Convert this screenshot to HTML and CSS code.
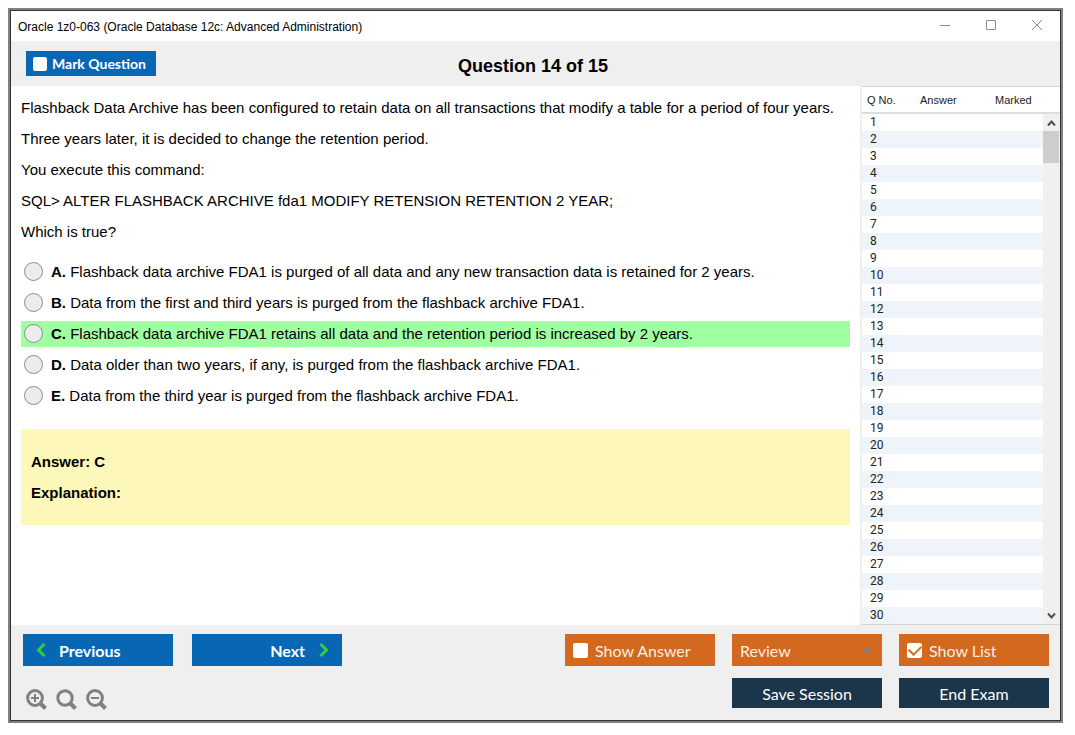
FILE: index.html
```html
<!DOCTYPE html>
<html lang="en">
<head>
<meta charset="utf-8">
<title>Oracle 1z0-063 (Oracle Database 12c: Advanced Administration)</title>
<link rel="stylesheet" href="styles.css">
</head>
<body>
<div class="window">
  <header class="titlebar">
    <span class="titlebar-text">Oracle 1z0-063 (Oracle Database 12c: Advanced Administration)</span>
    <div class="window-controls">
      <button type="button" aria-label="Minimize"><svg width="12" height="12" viewBox="0 0 12 12"><path d="M1 6.5H11"/></svg></button>
      <button type="button" aria-label="Maximize"><svg width="12" height="12" viewBox="0 0 12 12"><path d="M1.5 1.5h9v9h-9z"/></svg></button>
      <button type="button" aria-label="Close"><svg width="12" height="12" viewBox="0 0 12 12"><path d="M1 1l10 10M11 1L1 11"/></svg></button>
    </div>
  </header>

  <div class="heading">
    <label class="mark"><input type="checkbox" class="check">Mark Question</label>
    <h1>Question 14 of 15</h1>
  </div>

  <div class="body">
    <main class="question">
      <div class="prompt">
        <p>Flashback Data Archive has been configured to retain data on all transactions that modify a table for a period of four years.</p>
        <p>Three years later, it is decided to change the retention period.</p>
        <p>You execute this command:</p>
        <p>SQL&gt; ALTER FLASHBACK ARCHIVE fda1 MODIFY RETENSION RETENTION 2 YEAR;</p>
        <p>Which is true?</p>
      </div>
      <div class="options" role="radiogroup" aria-label="Answers">
        <label class="option"><input type="radio" name="answer"><span><b>A.</b> Flashback data archive FDA1 is purged of all data and any new transaction data is retained for 2 years.</span></label>
        <label class="option"><input type="radio" name="answer"><span><b>B.</b> Data from the first and third years is purged from the flashback archive FDA1.</span></label>
        <label class="option option-correct"><input type="radio" name="answer"><span><b>C.</b> Flashback data archive FDA1 retains all data and the retention period is increased by 2 years.</span></label>
        <label class="option"><input type="radio" name="answer"><span><b>D.</b> Data older than two years, if any, is purged from the flashback archive FDA1.</span></label>
        <label class="option"><input type="radio" name="answer"><span><b>E.</b> Data from the third year is purged from the flashback archive FDA1.</span></label>
      </div>
      <section class="explanation">
        <p>Answer: C</p>
        <p>Explanation:</p>
      </section>
    </main>

    <aside class="list">
      <table>
        <thead><tr><th class="col-no">Q No.</th><th class="col-answer">Answer</th><th>Marked</th></tr></thead>
        <tbody>
          <tr><td>1</td><td></td><td></td></tr>
          <tr><td>2</td><td></td><td></td></tr>
          <tr><td>3</td><td></td><td></td></tr>
          <tr><td>4</td><td></td><td></td></tr>
          <tr><td>5</td><td></td><td></td></tr>
          <tr><td>6</td><td></td><td></td></tr>
          <tr><td>7</td><td></td><td></td></tr>
          <tr><td>8</td><td></td><td></td></tr>
          <tr><td>9</td><td></td><td></td></tr>
          <tr><td>10</td><td></td><td></td></tr>
          <tr><td>11</td><td></td><td></td></tr>
          <tr><td>12</td><td></td><td></td></tr>
          <tr><td>13</td><td></td><td></td></tr>
          <tr><td>14</td><td></td><td></td></tr>
          <tr><td>15</td><td></td><td></td></tr>
          <tr><td>16</td><td></td><td></td></tr>
          <tr><td>17</td><td></td><td></td></tr>
          <tr><td>18</td><td></td><td></td></tr>
          <tr><td>19</td><td></td><td></td></tr>
          <tr><td>20</td><td></td><td></td></tr>
          <tr><td>21</td><td></td><td></td></tr>
          <tr><td>22</td><td></td><td></td></tr>
          <tr><td>23</td><td></td><td></td></tr>
          <tr><td>24</td><td></td><td></td></tr>
          <tr><td>25</td><td></td><td></td></tr>
          <tr><td>26</td><td></td><td></td></tr>
          <tr><td>27</td><td></td><td></td></tr>
          <tr><td>28</td><td></td><td></td></tr>
          <tr><td>29</td><td></td><td></td></tr>
          <tr><td>30</td><td></td><td></td></tr>
        </tbody>
      </table>
      <div class="scroll">
        <div class="scroll-head"></div>
        <div class="scroll-bar">
          <button type="button" aria-label="Scroll up"><svg width="9" height="8" viewBox="0 0 9 8"><path d="M1 6.5L4.5 2.5L8 6.5"/></svg></button>
          <div class="scroll-track"><div class="scroll-thumb"></div></div>
          <button type="button" aria-label="Scroll down"><svg width="9" height="8" viewBox="0 0 9 8"><path d="M1 1.5L4.5 5.5L8 1.5"/></svg></button>
        </div>
      </div>
    </aside>
  </div>

  <footer class="footer">
    <div class="footer-left">
      <div class="nav">
        <button type="button" class="btn btn-blue"><svg width="12" height="16" viewBox="0 0 12 16"><path d="M9.5 2L3.5 8l6 6"/></svg>Previous</button>
        <button type="button" class="btn btn-blue btn-next">Next<svg width="12" height="16" viewBox="0 0 12 16"><path d="M2.500 2L8.500 8l-6 6"/></svg></button>
      </div>
      <div class="zoom">
        <button type="button" aria-label="Zoom in"><svg width="22" height="22" viewBox="0 0 22 22"><circle cx="9" cy="9" r="7.400"/><path class="handle" d="M14.500 14.500L19.500 19.500"/><path class="sign" d="M5 9h8M9 5v8"/></svg></button>
        <button type="button" aria-label="Reset zoom"><svg width="22" height="22" viewBox="0 0 22 22"><circle class="thick" cx="9" cy="9" r="7.200"/><path class="handle" d="M14.500 14.500L19.500 19.500"/></svg></button>
        <button type="button" aria-label="Zoom out"><svg width="22" height="22" viewBox="0 0 22 22"><circle cx="9" cy="9" r="7.400"/><path class="handle" d="M14.500 14.500L19.500 19.500"/><path class="sign" d="M5 9h8"/></svg></button>
      </div>
    </div>
    <div class="actions">
      <label class="btn btn-orange"><input type="checkbox" class="check">Show Answer</label>
      <button type="button" class="btn btn-orange btn-review" aria-haspopup="menu">Review<svg width="10" height="6" viewBox="0 0 10 6"><path d="M0 6L5 0l5 6z"/></svg></button>
      <label class="btn btn-orange"><input type="checkbox" class="check" checked>Show List</label>
      <button type="button" class="btn btn-navy btn-save">Save Session</button>
      <button type="button" class="btn btn-navy">End Exam</button>
    </div>
  </footer>
</div>
</body>
</html>
```
FILE: styles.css
```css
* { box-sizing: border-box; }
body {
  margin: 0;
  min-height: 100vh;
  padding: 8px 12px 12px 8px;
  display: flex;
  background: #fff;
  color: #000;
  font-family: "Liberation Sans", Arial, sans-serif;
  font-size: 15px;
}
button { border: 0; padding: 0; background: none; color: inherit; font: inherit; }
p, h1 { margin: 0; }
svg { display: block; fill: none; }

.window {
  flex: 1;
  display: flex;
  flex-direction: column;
  border: 2px solid #808080;
  outline: 1px solid #333;
  outline-offset: -3px;
  padding: 1px;
}

.titlebar { display: flex; justify-content: space-between; align-items: center; height: 30px; padding-left: 7px; }
.titlebar-text { padding-top: 2px; font-size: 12px; }
.window-controls { display: flex; padding: 0 17px 3px 0; gap: 34px; }
.window-controls svg { stroke: #8c8c8c; }

.heading {
  display: grid;
  grid-template-columns: 1fr auto 1fr;
  align-items: center;
  height: 45px;
  padding: 0 20px 0 15px;
  background: #efefef;
}
.heading h1 { padding-top: 6px; font-size: 18px; line-height: 21px; }
.mark {
  justify-self: start;
  display: flex;
  align-items: center;
  gap: 5px;
  width: 130px;
  height: 25px;
  padding-left: 7px;
  background: #0867b5;
  color: #fff;
  font: bold 14px Lato, sans-serif;
}
.check {
  appearance: none;
  display: grid;
  place-items: center;
  width: 14px;
  height: 14px;
  margin: 0;
  border-radius: 2px;
  background: #fff;
}

.body { flex: 1; display: flex; }
.question { flex: 1; padding: 6px 10px 0; }
.prompt p, .explanation p { line-height: 31px; }
.options { display: grid; gap: 5px; margin-top: 12px; }
.option { display: flex; align-items: center; gap: 8px; height: 26px; padding: 0 0 1px 3px; }
.option-correct { background: #a0ffa0; }
.option input {
  appearance: none;
  width: 19px;
  height: 19px;
  margin: 0;
  border: 1px solid #8c8c8c;
  border-radius: 50%;
  background: #ececec;
}
.explanation { margin-top: 20px; padding: 17px 10px; background: #fdf7b9; font-weight: bold; }

.list {
  display: flex;
  width: 200px;
  border-left: 2px solid #efefef;
  border-bottom: 1px solid #d5d5d5;
  font-size: 11px;
}
.list table { flex: 1; border-collapse: separate; border-spacing: 0; table-layout: fixed; color: #222; }
.list th {
  height: 28px;
  padding: 0 0 0 5px;
  border-top: 1px solid #d5d5d5;
  border-bottom: 2px solid #dcdcdc;
  font-weight: normal;
  text-align: left;
}
.list .col-no { width: 53px; }
.list .col-answer { width: 75px; }
.list td { height: 17px; padding: 0 0 0 8px; font: 12px/17px Roboto, sans-serif; }
.list tbody tr:nth-child(even) { background: #eef4f9; }
.scroll { display: flex; flex-direction: column; width: 17px; }
.scroll-head { height: 28px; border-top: 1px solid #d5d5d5; border-bottom: 2px solid #dcdcdc; }
.scroll-bar { flex: 1; display: flex; flex-direction: column; padding-right: 1px; background: #f0f0f0; }
.scroll-bar button { display: grid; place-items: center; height: 17px; }
.scroll-bar svg { stroke: #505050; stroke-width: 2; }
.scroll-track { flex: 1; }
.scroll-thumb { height: 32px; background: #cdcdcd; }

.footer { display: flex; justify-content: space-between; height: 95px; padding: 9px 11px 0 12px; background: #efefef; }
.nav { display: flex; gap: 19px; }
.btn {
  display: flex;
  align-items: center;
  width: 150px;
  height: 32px;
  color: #fff;
  font: 16px Lato, sans-serif;
}
.btn-blue { gap: 12px; padding-left: 12px; background: #0867b5; font-weight: bold; }
.btn-blue svg { stroke: #2fd03a; stroke-width: 3; }
.btn-next { justify-content: flex-end; gap: 13px; padding: 0 12px 0 0; }
.zoom { display: flex; gap: 8px; padding: 23px 0 0 3px; }
.zoom svg { stroke: #808080; stroke-width: 3; }
.zoom .handle { stroke-width: 4; }
.zoom .sign { stroke-width: 2; }

.actions { display: grid; grid-template-columns: repeat(3, 150px); gap: 12px 17px; align-content: start; }
.btn-orange { gap: 7px; padding: 0 8px; background: #d2691e; color: #fbeee4; }
.btn-orange .check { width: 15px; height: 15px; }
.check:checked::before {
  content: "";
  width: 10px;
  height: 6px;
  margin-bottom: 3px;
  border: solid #d2691e;
  border-width: 0 0 2px 2px;
  transform: rotate(-45deg);
}
.btn-review { justify-content: space-between; }
.btn-review svg { margin-right: 2px; fill: #8a8078; }
.btn-navy { justify-content: center; height: 30px; background: #1b354b; }
.btn-save { grid-column: 2; }
```
